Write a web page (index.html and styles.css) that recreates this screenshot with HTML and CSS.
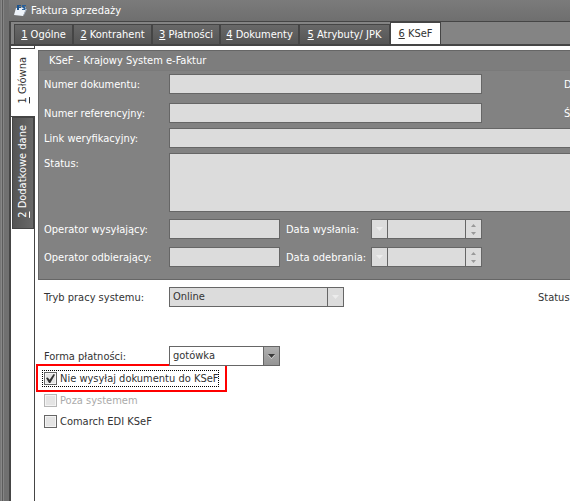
FILE: index.html
```html
<!DOCTYPE html>
<html lang="pl">
<head>
<meta charset="utf-8">
<title>Faktura sprzedaży</title>
<link rel="stylesheet" href="styles.css">
</head>
<body>
<div class="window">
  <div class="frame"></div>
  <div class="main">
    <header class="titlebar">
      <svg class="logo" width="14" height="14" viewBox="0 0 14 14" aria-hidden="true">
        <path d="M2 4 L12 3 L12 5 L9 12 L0 11 Z" fill="#eef3f9"/>
        <path d="M9 12 L12 5 L13 5 L10 11 Z" fill="#aebdd0"/>
        <path d="M3 1h4v1H5v1h2v1H5v2H3z" fill="#1c5590"/>
        <path d="M8 1h4v1h-2l2 2-1 2H8V5h2L8 3z" fill="#285f98"/>
      </svg>
      <span>Faktura sprzedaży</span>
    </header>
    <nav class="tabs">
      <button class="tab w-ogolne"><u>1</u> Ogólne</button>
      <button class="tab w-long"><u>2</u> Kontrahent</button>
      <button class="tab w-mid"><u>3</u> Płatności</button>
      <button class="tab w-long"><u>4</u> Dokumenty</button>
      <button class="tab w-wide"><u>5</u> Atrybuty/ JPK</button>
      <button class="tab active"><u>6</u> KSeF</button>
    </nav>
    <div class="body">
      <div class="side">
        <button class="side-tab active"><span><u>1</u> Główna</span></button>
        <button class="side-tab"><span><u>2</u> Dodatkowe dane</span></button>
      </div>
      <main class="content">
        <section class="panel">
          <h2>KSeF - Krajowy System e-Faktur</h2>
          <div class="rows">
            <div class="row gap-l"><label for="num">Numer dokumentu:</label><input id="num" class="half" disabled><span class="far">D</span></div>
            <div class="row gap-s"><label for="ref">Numer referencyjny:</label><input id="ref" class="half" disabled><span class="far">Ś</span></div>
            <div class="row gap-s"><label for="link">Link weryfikacyjny:</label><input id="link" class="full" disabled></div>
            <div class="row gap-m top"><label for="status">Status:</label><textarea id="status" class="full" disabled></textarea></div>
            <div class="row gap-l">
              <label for="ow">Operator wysyłający:</label><input id="ow" class="short" disabled>
              <label class="date-label" for="dw">Data wysłania:</label>
              <div class="date">
                <button class="drop" disabled aria-label="Kalendarz"><svg width="7" height="4"><path d="M0 0h7L3.500 4z" fill="#ececec"/></svg></button>
                <input id="dw" disabled>
                <span class="spin"><svg width="5" height="11"><path d="M0 3h5L2.500 0zM0 8h5L2.500 11z" fill="#999"/></svg></span>
              </div>
            </div>
            <div class="row">
              <label for="oo">Operator odbierający:</label><input id="oo" class="short" disabled>
              <label class="date-label" for="do">Data odebrania:</label>
              <div class="date">
                <button class="drop" disabled aria-label="Kalendarz"><svg width="7" height="4"><path d="M0 0h7L3.500 4z" fill="#ececec"/></svg></button>
                <input id="do" disabled>
                <span class="spin"><svg width="5" height="11"><path d="M0 3h5L2.500 0zM0 8h5L2.500 11z" fill="#999"/></svg></span>
              </div>
            </div>
          </div>
        </section>
        <section class="options">
          <div class="row mode">
            <label for="tryb">Tryb pracy systemu:</label>
            <div class="combo off"><select id="tryb" disabled><option>Online</option></select><span class="arrow"><svg width="7" height="4"><path d="M0 0h7L3.500 4z" fill="#ececec"/></svg></span></div>
            <span class="far-status">Status</span>
          </div>
          <div class="row">
            <label for="forma">Forma płatności:</label>
            <div class="combo small"><select id="forma"><option>gotówka</option></select><span class="arrow"><svg width="7" height="5"><path d="M0 1L3.500 5 7 1z" fill="#ddd"/><path d="M0 0h7L3.500 4z" fill="#3a3a3a"/></svg></span></div>
          </div>
          <div class="highlight"><label class="check focus"><input type="checkbox" checked><span>Nie wysyłaj dokumentu do KSeF</span></label></div>
          <label class="check disabled"><input type="checkbox" disabled><span>Poza systemem</span></label>
          <label class="check"><input type="checkbox"><span>Comarch EDI KSeF</span></label>
        </section>
      </main>
    </div>
  </div>
</div>
</body>
</html>
```
FILE: styles.css
```css
* { box-sizing: border-box; }
body {
  margin: 0;
  overflow: hidden;
  background: #727272;
  color: #333;
  font: 11px/14px "DejaVu Sans Condensed", "DejaVu Sans", sans-serif;
}
button, input, select, textarea {
  margin: 0;
  padding: 0;
  border: 1px solid #666;
  border-radius: 0;
  font: inherit;
  color: inherit;
}
.window { display: flex; min-height: 100vh; background: linear-gradient(#7b7b7b, #6e6e6e 22px); }
.frame {
  flex: 0 0 9px;
  background: linear-gradient(90deg, #777 1px, #888 1px 2px, #5c5c5c 2px 3px, #858585 3px 4px, #707070 4px);
}
.main { flex: 1; min-width: 0; display: flex; flex-direction: column; }
.titlebar {
  display: flex;
  align-items: center;
  gap: 3px;
  height: 21px;
  padding: 0 0 0 5px;
  color: #fff;
}
.tabs {
  display: flex;
  align-items: flex-end;
  height: 25px;
  padding-left: 3px;
  border: solid #454545;
  border-width: 1px 0 2px 2px;
  background: #848484;
}
.tab {
  height: 20px;
  border: solid #454545;
  border-width: 1px 1px 0;
  padding: 0;
  background: linear-gradient(#686868, #555);
  color: #fff;
  text-align: center;
  white-space: nowrap;
}
.w-ogolne { width: 59px; }
.w-long { width: 79px; }
.w-mid { width: 68px; }
.w-wide { width: 91px; }
.tab.active { height: 22px; width: 51px; background: #fff; color: #333; }
.body { flex: 1; display: flex; border-left: 2px solid #454545; background: #fff; }
.side {
  flex: 0 0 24px;
  display: flex;
  flex-direction: column;
  align-items: flex-end;
  padding-top: 2px;
  border-right: 1px solid #454545;
}
.side-tab {
  width: 22px;
  height: 112px;
  border-color: #454545;
  background: linear-gradient(90deg, #555, #686868);
  color: #fff;
}
.side-tab span { writing-mode: vertical-rl; transform: rotate(180deg); }
.side-tab.active {
  width: 24px;
  height: 69px;
  margin-right: -1px;
  border-width: 1px 0;
  background: #fff;
  color: #333;
}
.content { flex: 1; min-width: 0; padding: 4px 0 0 3px; overflow: hidden; }
.panel {
  border: 1px solid #666;
  border-right: 0;
  background: #828282;
  color: #fff;
}
.panel h2 {
  height: 20px;
  margin: 0;
  padding-left: 10px;
  border-bottom: 1px solid #7a7a7a;
  background: #7d7d7d;
  font: inherit;
  line-height: 20px;
}
.rows { padding: 3px 0 12px 5px; }
.row { display: flex; align-items: center; white-space: nowrap; }
.row > label, .row > span { padding-top: 2px; }
.row > label:first-child { flex: 0 0 125px; }
.row.top { align-items: flex-start; }
.row.top > label { padding-top: 4px; }
.gap-s { margin-bottom: 5px; }
.gap-m { margin-bottom: 7px; }
.gap-l { margin-bottom: 8px; }
.rows .gap-l:first-child { margin-bottom: 9px; }
.panel input { height: 20px; background: #dcdcdc; }
.half { flex: 0 0 313px; }
.full { flex: 1; min-width: 0; border-right: 0; }
.panel .short { flex: 0 0 111px; width: 111px; }
textarea { height: 59px; background: #dcdcdc; resize: none; }
.row > .far { padding-left: 82px; }
.row > .date-label { flex: 0 0 91px; padding-left: 6px; }
.date { display: flex; flex: 0 0 111px; width: 111px; }
.date input { flex: 1; width: 0; min-width: 0; }
.drop, .spin {
  flex: 0 0 16px;
  display: grid;
  place-items: center;
  border: 1px solid #666;
  background: #dcdcdc;
}
.drop { border-right: 0; }
.spin { border-left: 0; }
.options { padding: 7px 0 0 6px; }
.row.mode { margin-bottom: 39px; }
.combo { display: flex; flex: 0 0 175px; height: 20px; border: 1px solid #666; background: #fff; }
.combo.small { flex-basis: 111px; }
.combo.off, .combo.off .arrow { background: #dcdcdc; }
.combo select {
  flex: 1;
  min-width: 0;
  appearance: none;
  border: 0;
  padding: 0 3px;
  background: none;
  opacity: 1;
}
.arrow {
  flex: 0 0 16px;
  display: grid;
  place-items: center;
  border-left: 1px solid #666;
  background: linear-gradient(#b0b0b0, #959595);
}
.far-status { margin-left: 194px; }
.highlight {
  width: 191px;
  height: 28px;
  margin: -2px 0 -2px -8px;
  padding: 4px;
  border: 2px solid #f00;
}
.check { display: flex; align-items: center; gap: 3px; height: 21px; white-space: nowrap; }
.check span { padding-top: 1px; }
.check.focus { width: max-content; height: 17px; border: 1px dotted #000; padding-left: 1px; }
.check.disabled { color: #aaa; }
.check input {
  appearance: none;
  display: grid;
  place-items: center;
  flex: 0 0 13px;
  height: 13px;
  background: #e4e4e4;
  box-shadow: inset 0 0 0 1px #f4f4f4;
}
.check input:disabled { border-color: #b5b5b5; }
.check input:checked::after {
  content: "";
  width: 9px;
  height: 9px;
  background: #333;
  clip-path: polygon(0 45%, 20% 38%, 40% 65%, 85% 0, 100% 8%, 48% 100%, 34% 100%);
}
```
